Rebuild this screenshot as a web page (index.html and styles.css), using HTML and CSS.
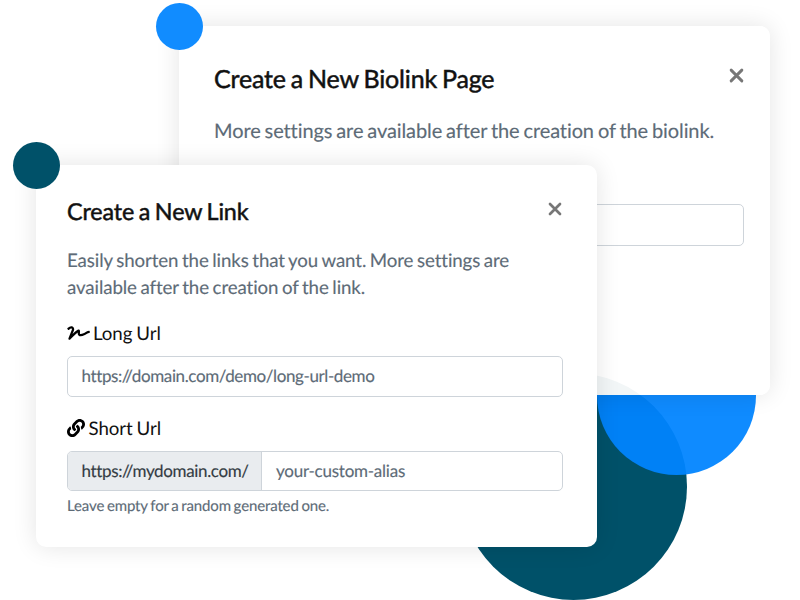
FILE: index.html
```html
<!DOCTYPE html>
<html lang="en">
<head>
<meta charset="utf-8">
<title>Create a link</title>
<link rel="stylesheet" href="styles.css">
</head>
<body>
<main class="scene">
  <span class="disc disc-teal-large"></span>
  <span class="disc-blue-half"></span>
  <section class="card card-back">
    <header class="card-head">
      <h2 class="title"><span>Create a New Biolink Page</span></h2>
      <svg class="close" viewBox="0 0 14 14"><path d="M2 2 12 12M12 2 2 12"/></svg>
    </header>
    <p class="lead">More settings are available after the creation of the biolink.</p>
    <div class="field"></div>
  </section>
  <section class="card card-front">
    <header class="card-head">
      <h2 class="title"><span>Create a New Link</span></h2>
      <svg class="close" viewBox="0 0 14 14"><path d="M2 2 12 12M12 2 2 12"/></svg>
    </header>
    <p class="lead">Easily shorten the links that you want. More settings are<br>available after the creation of the link.</p>
    <div class="label label-long">
      <svg class="icon-signature" viewBox="0 0 640 512"><path d="M623.2 192c-51.8 3.5-125.7 54.7-163.1 71.5-29.1 13.1-54.2 24.4-76.1 24.4-22.6 0-26-16.2-21.3-51.9 1.1-8 11.7-79.2-42.7-76.1-25.1 1.5-64.3 24.8-169.5 126L192 182.2c30.4-75.9-53.2-151.5-129.7-102.8L7.4 116.3C0 121-2.2 130.9 2.5 138.4l17.2 27c4.7 7.5 14.6 9.7 22.1 4.9l58-38.9c18.4-11.7 40.7 7.2 32.7 27.1L34.3 404.1C27.5 421 37 448 64 448c8.3 0 16.5-3.2 22.6-9.4 42.2-42.2 154.7-150.7 211.2-195.8-2.2 28.5-2.1 58.9 20.6 83.8 15.3 16.8 37.3 25.3 65.5 25.3 35.6 0 68-14.6 102.3-30 33-14.8 99-62.6 138.4-65.8 8.5-.7 15.2-7.3 15.2-15.8v-32.1c.2-9.1-7.5-16.8-16.6-16.1z"/></svg>
      <span>Long Url</span>
    </div>
    <div class="field field-long"><span>https://domain.com/demo/long-url-demo</span></div>
    <div class="label label-short">
      <svg class="icon-link" viewBox="0 0 512 512"><path d="M326.612 185.391c59.747 59.809 58.927 155.698.36 214.59-.11.12-.24.25-.36.37l-67.2 67.2c-59.27 59.27-155.699 59.262-214.96 0-59.27-59.26-59.27-155.7 0-214.96l37.106-37.106c9.84-9.84 26.786-3.3 27.294 10.606.648 17.722 3.826 35.527 9.69 52.721 1.986 5.822.567 12.262-3.783 16.612l-13.087 13.087c-28.026 28.026-28.905 73.66-1.155 101.96 28.024 28.579 74.086 28.749 102.325.51l67.2-67.19c28.191-28.191 28.073-73.757 0-101.83-3.701-3.694-7.429-6.564-10.341-8.569a16.037 16.037 0 0 1-6.947-12.606c-.396-10.567 3.348-21.456 11.698-29.806l21.054-21.055c5.521-5.521 14.182-6.199 20.584-1.731a152.482 152.482 0 0 1 20.522 17.197zM467.547 44.449c-59.261-59.262-155.69-59.27-214.96 0l-67.2 67.2c-.12.12-.25.25-.36.37-58.566 58.892-59.387 154.781.36 214.59a152.454 152.454 0 0 0 20.521 17.196c6.402 4.468 15.064 3.789 20.584-1.731l21.054-21.055c8.35-8.35 12.094-19.239 11.698-29.806a16.037 16.037 0 0 0-6.947-12.606c-2.912-2.005-6.64-4.875-10.341-8.569-28.073-28.073-28.191-73.639 0-101.83l67.2-67.19c28.239-28.239 74.3-28.069 102.325.51 27.75 28.3 26.872 73.934-1.155 101.96l-13.087 13.087c-4.35 4.35-5.769 10.79-3.783 16.612 5.864 17.194 9.042 34.999 9.69 52.721.509 13.906 17.454 20.446 27.294 10.606l37.106-37.106c59.271-59.259 59.271-155.699.001-214.959z"/></svg>
      <span>Short Url</span>
    </div>
    <div class="group">
      <div class="prefix"><span>https://mydomain.com/</span></div>
      <div class="alias"><span>your-custom-alias</span></div>
    </div>
    <p class="hint"><span>Leave empty for a random generated one.</span></p>
  </section>
  <span class="disc disc-blue"></span>
  <span class="disc disc-teal"></span>
</main>
</body>
</html>
```
FILE: styles.css
```css
* { box-sizing: border-box; }
body { margin: 0; background: #fff; font-family: Lato, sans-serif; color: #111; text-rendering: geometricPrecision; font-variant-ligatures: none; }
h2, p { margin: 0; font-weight: 400; }
.scene { position: relative; width: 800px; height: 600px; overflow: hidden; }

.disc { position: absolute; width: 47px; height: 47px; border-radius: 50%; }
.disc-blue { left: 156px; top: 3px; background: #118cff; }
.disc-teal { left: 13px; top: 142px; background: #005169; }
.disc-teal-large { left: 460px; top: 373px; width: 227px; height: 227px; background: #005169; }
.disc-blue-half { position: absolute; left: 597px; top: 395px; width: 159px; height: 80px; border-radius: 0 0 80px 80px; background: rgba(0, 132, 255, .94); }

.card { position: absolute; border-radius: 10px; box-shadow: 0 0 24px rgba(0, 0, 0, .11); }
.card-back { left: 179px; top: 26px; width: 591px; height: 369px; padding: 35px 26px 0 35px; background: rgba(255, 255, 255, .95); }
.card-front { left: 36px; top: 165px; width: 561px; height: 382px; padding: 30px 34px 0 31px; background: #fff; }
.card-head { display: flex; justify-content: space-between; }
.title { white-space: nowrap; -webkit-text-stroke: .5px #111; letter-spacing: -.15px; word-spacing: -1.3px; }
.close { width: 14px; height: 14px; fill: none; stroke: #777; stroke-width: 2.7; stroke-linecap: round; }
.lead { color: #5d6b77; white-space: nowrap; letter-spacing: -.1px; word-spacing: -1.05px; -webkit-text-stroke: .15px #5d6b77; }

.card-back .title { font-size: 25px; line-height: 36px; }
.card-back .close { width: 15px; height: 15px; margin: 7px .5px 0 0; }
.card-back .lead { margin-top: 19px; font-size: 20px; line-height: 30px; }
.card-back .field { margin-top: 58px; height: 42px; }

.card-front .title { font-size: 23.3px; line-height: 33px; letter-spacing: -.1px; }
.card-front .close { margin-top: 7px; margin-right: 1px; }
.card-front .lead { margin-top: 19px; font-size: 18.7px; line-height: 27px; }

.field { border: 1px solid #ced4da; border-radius: 5px; }
.label { display: flex; align-items: center; height: 28px; font-size: 18.7px; letter-spacing: -.1px; word-spacing: -.6px; white-space: nowrap; }
.label svg { fill: #000; }
.label-long { margin-top: 18px; gap: 3px; }
.label-short { margin-top: 17px; gap: 3.5px; }
.icon-signature { width: 23px; height: 18px; }
.icon-link { width: 18px; height: 18px; }
.field-long { height: 41px; margin-top: 9px; padding-left: 13.5px; font-size: 17px; line-height: 38px; letter-spacing: -.39px; color: #5d6b77; }
.group { display: flex; height: 40px; margin-top: 9px; border: 1px solid #ced4da; border-radius: 5px; overflow: hidden; font-size: 17px; line-height: 38px; white-space: nowrap; }
.prefix { width: 194px; padding-left: 13.5px; background: #e9ecef; border-right: 1px solid #ced4da; color: #343c44; letter-spacing: -.35px; }
.alias { padding-left: 14px; color: #5d6b77; letter-spacing: -.24px; }
.field-long, .group, .hint { -webkit-text-stroke: .15px; }
.hint { margin-top: 4px; font-size: 15px; line-height: 22px; letter-spacing: -.13px; word-spacing: -1px; color: #5d6b77; }
```
